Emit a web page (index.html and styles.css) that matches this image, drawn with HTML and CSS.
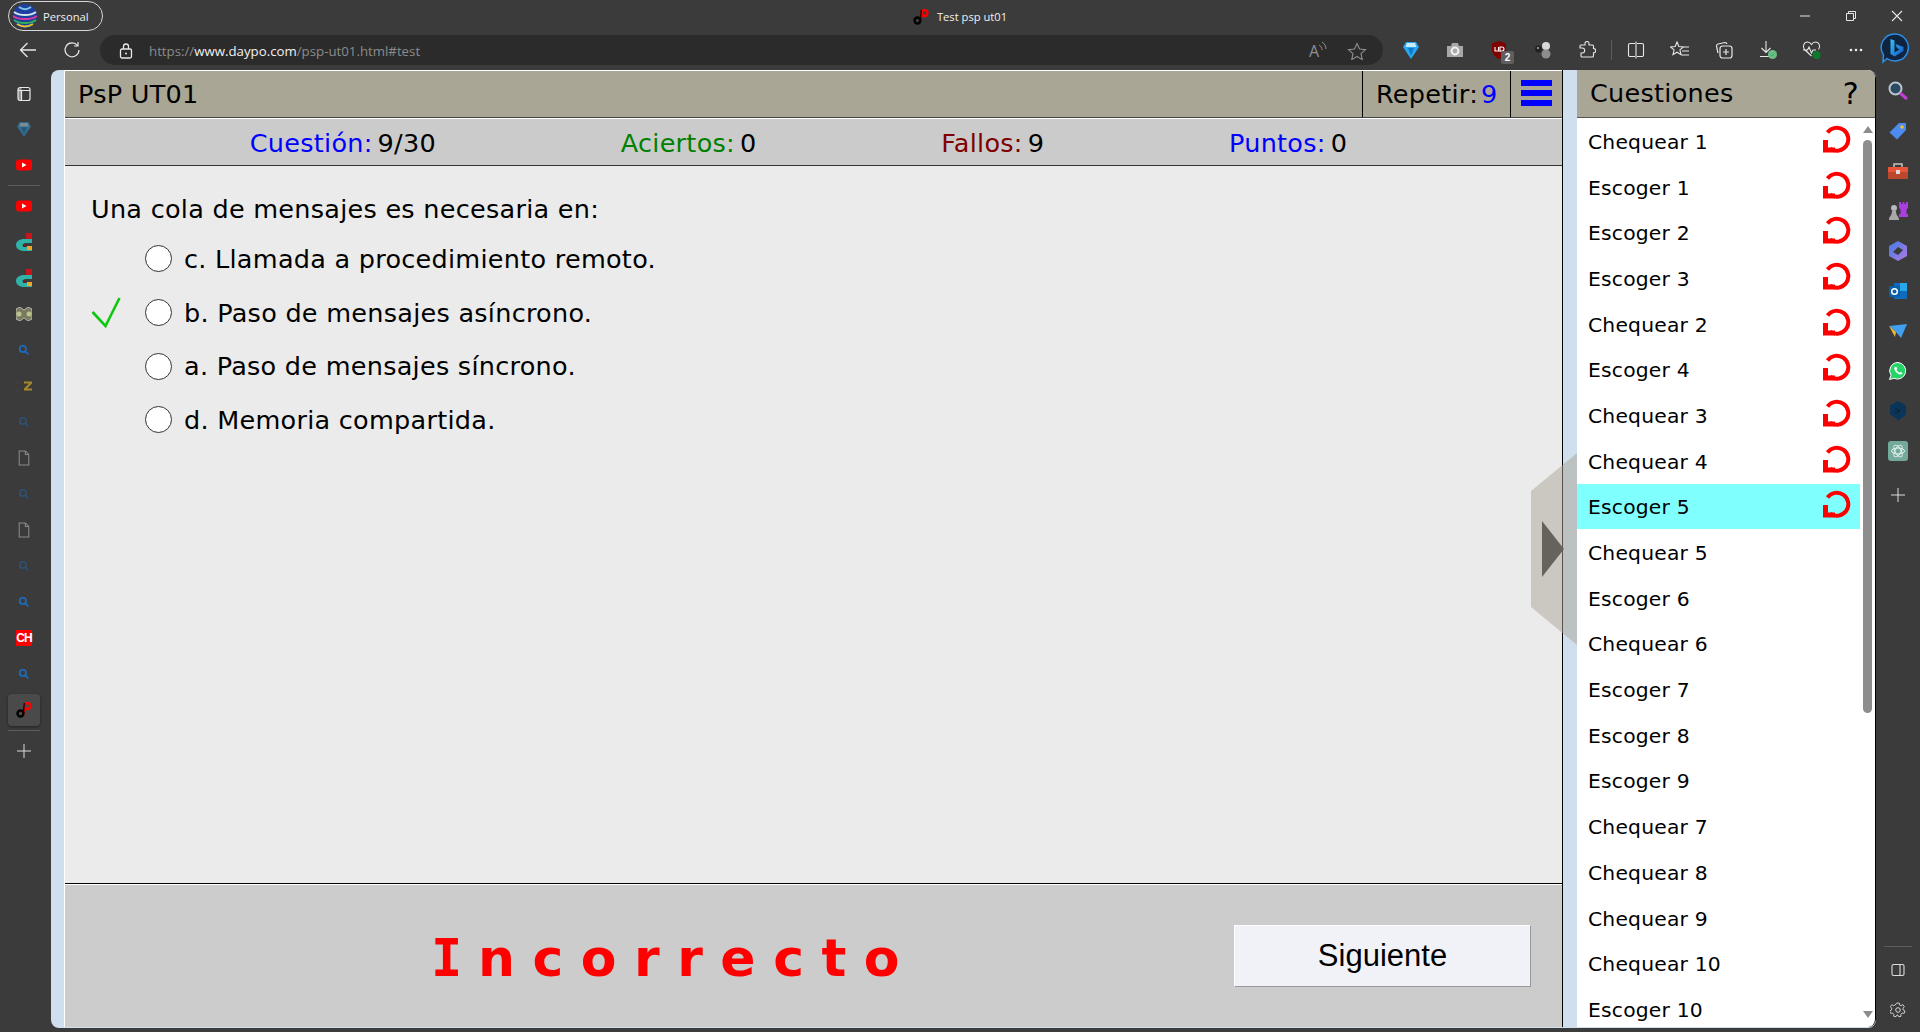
FILE: index.html
```html
<!DOCTYPE html>
<html lang="es">
<head>
<meta charset="utf-8">
<title>Test psp ut01</title>
<link rel="stylesheet" href="styles.css">
</head>
<body>
<svg class="defs" xmlns="http://www.w3.org/2000/svg">
  <symbol id="search" viewBox="0 0 16 16"><circle cx="6.5" cy="6.5" r="4.2" fill="none" stroke="#1a6fc9" stroke-width="2"/><path d="M9.8 9.8 14 14" stroke="#1a6fc9" stroke-width="2"/></symbol>
  <symbol id="doc" viewBox="0 0 16 18"><path d="M2.5 1h7l4 4v12h-11z M9.5 1v4h4" fill="none" stroke="#8a8a8a" stroke-width="1.2"/></symbol>
  <symbol id="yt" viewBox="0 0 16 12"><rect width="16" height="11" y=".5" rx="3" fill="#f00"/><path d="M6 3.5v5l4.5-2.5z" fill="#fff"/></symbol>
  <symbol id="game" viewBox="0 0 16 18"><rect x="10" y="0" width="6" height="8" fill="#c4161c"/><path d="M16 6H8C3.500 6 0 8.500 0 12s3.500 6 8 6h8v-4H9l-3-2 3-2h7z" fill="#2fb3a8"/><rect x="11" y="13" width="5" height="4" fill="#e8a92c"/><rect x="7" y="11" width="3" height="3" fill="#6e1f1f"/></symbol>
  <symbol id="redo" viewBox="0 0 28 28"><path d="M4.500 7.500A11.500 11.500 0 1 1 7 23.500" fill="none" stroke="#f00" stroke-width="4"/><path d="M0 15h5v7.500h7v5H0z" fill="#f00"/></symbol>
  <symbol id="logo" viewBox="0 0 16 16"><path d="M8.500 5 7.500 13" stroke="#f00" stroke-width="2.200"/><circle cx="4.500" cy="11.500" r="3" fill="none" stroke="#000" stroke-width="2.400"/><circle cx="11.500" cy="4" r="3" fill="none" stroke="#f00" stroke-width="2.400"/><path d="M8.300 1 7.500 11" stroke="#000" stroke-width="1.200"/></symbol>
  <symbol id="plus" viewBox="0 0 16 16"><path d="M8 1v14M1 8h14" stroke="#dcdcdc" stroke-width="1"/></symbol>
  <symbol id="gem" viewBox="0 0 16 18"><path d="M3 1h10l3 5-8 12L0 6z" fill="#29a7f0"/><path d="M4 2h8l1.500 4H2.500z" fill="#c8ecff"/><path d="M5 7h6l-3 8z" fill="#0f79c8"/></symbol>
</svg>

<header class="titlebar">
  <div class="title-left">
    <div class="profile">
      <svg class="avatar" viewBox="0 0 24 24"><circle cx="12" cy="12" r="12" fill="#1d3fa0"/><path d="M1 8c6 4 16 4 22 0" fill="none" stroke="#d8e6f0" stroke-width="2"/><path d="M0 12c6 4 18 4 24 0" fill="none" stroke="#d63aa0" stroke-width="2"/><path d="M1 16c6 4 16 4 22 0" fill="none" stroke="#2fb34f" stroke-width="2"/><path d="M4 20c5 3 11 3 16 0" fill="none" stroke="#e6c52b" stroke-width="2"/><path d="M6 3c4 3 8 3 12 0" fill="none" stroke="#7ec4e8" stroke-width="2"/></svg>
      <span>Personal</span>
    </div>
  </div>
  <div class="title-center">
    <svg class="title-icon"><use href="#logo"/></svg>
    <span>Test psp ut01</span>
  </div>
  <div class="window-controls">
    <button class="win-btn"><svg width="12" height="12" viewBox="0 0 12 12"><path d="M1 6h10" stroke="#e6e6e6"/></svg></button>
    <button class="win-btn"><svg width="12" height="12" viewBox="0 0 12 12"><path d="M1.500 3.500h7v7h-7zM3.500 3.500v-2h7v7h-2" fill="none" stroke="#e6e6e6"/></svg></button>
    <button class="win-btn"><svg width="12" height="12" viewBox="0 0 12 12"><path d="M1 1l10 10M11 1 1 11" stroke="#e6e6e6" stroke-width="1.100"/></svg></button>
  </div>
</header>

<nav class="toolbar">
  <button class="tool nav-first"><svg width="18" height="18" viewBox="0 0 18 18"><path d="M17 9H1.500M8.500 2 1.500 9l7 7" fill="none" stroke="#e8e8e8" stroke-width="1.300"/></svg></button>
  <button class="tool"><svg width="18" height="18" viewBox="0 0 18 18"><path d="M14.500 4.500A7 7 0 1 0 16 9M15 1v4h-4" fill="none" stroke="#e8e8e8" stroke-width="1.200"/></svg></button>
  <div class="address">
    <svg class="lock" width="14" height="16" viewBox="0 0 14 16"><rect x="1.500" y="6" width="11" height="9" rx="1.500" fill="none" stroke="#e8e8e8" stroke-width="1.300"/><path d="M4.500 6V3.500a2.500 2.500 0 0 1 5 0V6" fill="none" stroke="#e8e8e8" stroke-width="1.300"/><circle cx="7" cy="10.500" r="1" fill="#e8e8e8"/></svg>
    <span class="url"><span class="url-dim">https://</span><span class="url-host">www.daypo.com</span><span class="url-dim">/psp-ut01.html#test</span></span>
    <span class="address-icons">
      <span class="read-aloud"><span class="read-a">A</span><svg width="8" height="12" viewBox="0 0 8 12"><path d="M0 4c2 1 3 3 3 5M3 1c2.500 1.500 4 4 4 7" fill="none" stroke="#8f8f8f"/></svg></span>
      <svg width="20" height="18" viewBox="0 0 20 18"><path d="M10 1.500l2.500 5.500 6 .6-4.500 4 1.300 6L10 14.500 4.700 17.600 6 11.600l-4.500-4 6-.6z" fill="none" stroke="#8f8f8f" stroke-width="1.100"/></svg>
    </span>
  </div>
  <div class="tools">
    <button class="tool"><svg width="16" height="18"><use href="#gem"/></svg></button>
    <button class="tool"><svg width="18" height="16" viewBox="0 0 18 16"><path d="M1 4h4l1-3h6l1 3h4v11H1z" fill="#a8a8a8"/><circle cx="9" cy="9" r="3.400" fill="none" stroke="#f2f2f2" stroke-width="2"/></svg></button>
    <button class="tool ublock"><svg width="16" height="18" viewBox="0 0 16 18"><path d="M1 2.500 8 0l7 2.500V9c0 4-3 7-7 9-4-2-7-5-7-9z" fill="#800000"/><path d="M4 6v4h3.500V6M9 11V6h2a2 2 0 0 1 0 4H9" fill="none" stroke="#fff" stroke-width="1.100"/></svg><span class="badge">2</span></button>
    <button class="tool"><svg width="16" height="18" viewBox="0 0 16 18"><circle cx="11" cy="5" r="4" fill="#d8d8d8"/><circle cx="11" cy="13" r="4.500" fill="#8d8d8d"/><circle cx="3.500" cy="8" r="3.500" fill="#222"/><circle cx="3" cy="7" r="1" fill="#aaa"/></svg></button>
    <button class="tool"><svg width="18" height="18" viewBox="0 0 18 18"><path d="M7 2.500a2 2 0 0 1 4 0V4h3.500a1 1 0 0 1 1 1v2.500a2.200 2.200 0 0 1 0 4.400V15a1 1 0 0 1-1 1H4a1 1 0 0 1-1-1v-3h1.200a2.500 2.500 0 0 0 0-5H2V5a1 1 0 0 1 1-1h4z" fill="none" stroke="#e8e8e8" stroke-width="1.100"/></svg></button>
    <span class="tool-sep"></span>
    <button class="tool"><svg width="18" height="18" viewBox="0 0 18 18"><path d="M8 2.500H3a1.500 1.500 0 0 0-1.500 1.500v10A1.500 1.500 0 0 0 3 15.500h5M10 2.500h5A1.500 1.500 0 0 1 16.500 4v10a1.500 1.500 0 0 1-1.500 1.500h-5M9 .5v17" fill="none" stroke="#e8e8e8" stroke-width="1.100"/></svg></button>
    <button class="tool"><svg width="20" height="18" viewBox="0 0 20 18"><path d="M7 1l1.800 4.500 4.700.4-3.600 3 1.100 4.700L7 11.200l-4 2.400 1.100-4.700-3.600-3 4.700-.4zM13 6h6M12 10h7M11 14h8" fill="none" stroke="#e8e8e8" stroke-width="1.100"/></svg></button>
    <button class="tool"><svg width="18" height="18" viewBox="0 0 18 18"><rect x="5" y="5" width="12" height="12" rx="2.500" fill="none" stroke="#e8e8e8" stroke-width="1.200"/><path d="M11 8v6M8 11h6M3 12 1.500 5A2 2 0 0 1 3 3l7-1.500a2 2 0 0 1 2 1.500" fill="none" stroke="#e8e8e8" stroke-width="1.200"/></svg></button>
    <button class="tool"><svg width="20" height="20" viewBox="0 0 20 20"><path d="M8 1v11M3.500 8 8 12.500 12.500 8M2 16.500h10" fill="none" stroke="#e8e8e8" stroke-width="1.100"/><circle cx="14.500" cy="14.500" r="4.500" fill="#6dbb86"/><path d="M12.500 14.500l1.500 1.500 2.500-2.500" fill="none" stroke="#2b5" stroke-width="1"/></svg></button>
    <button class="tool"><svg width="20" height="20" viewBox="0 0 20 20"><path d="M9.500 16 2.500 9.500C0 6.500 2 2 5.500 2c2 0 3 1 4 2.500C10.500 3 11.500 2 13.500 2 17 2 19 6.500 16.500 9.500M1 10h4.500l1.500-3 2.500 6 1.500-3h3" fill="none" stroke="#e8e8e8" stroke-width="1.100"/><circle cx="14.500" cy="15" r="4" fill="#0e7a2d"/></svg></button>
    <button class="tool"><svg width="14" height="4" viewBox="0 0 14 4"><circle cx="2" cy="2" r="1.300" fill="#eee"/><circle cx="7" cy="2" r="1.300" fill="#eee"/><circle cx="12" cy="2" r="1.300" fill="#eee"/></svg></button>
    <button class="tool bing"><svg width="30" height="36" viewBox="0 0 30 36"><defs><linearGradient id="bg" x1="0" y1="0" x2="1" y2="1"><stop offset="0" stop-color="#37c6f4"/><stop offset="1" stop-color="#1252c8"/></linearGradient></defs><path d="M15 2a13.500 13.500 0 1 1-8 24.500L3 30l.5-7A13.500 13.500 0 0 1 15 2z" fill="#10233f" stroke="#2b8fe6" stroke-width="1.500"/><path d="M10.500 7l4 1.500v12l5-3-2.500-1.500-1.500-4 8 3v4l-9 5.500-4-2.500z" fill="url(#bg)"/></svg></button>
  </div>
</nav>

<div class="workspace">
  <aside class="side-left">
    <div class="side-item side-first"><svg width="14" height="16" viewBox="0 0 14 16"><rect x="1" y="1.500" width="12" height="13" rx="2" fill="none" stroke="#e8e8e8" stroke-width="1.200"/><path d="M1 4.500h12M4.500 4.500V14.500" stroke="#e8e8e8" stroke-width="1.200" fill="none"/><path d="M1 2h3.500v12.500H1z" fill="#e8e8e8" opacity=".5"/></svg></div>
    <div class="side-item dim"><svg width="14" height="16"><use href="#gem"/></svg></div>
    <div class="side-item"><svg width="16" height="12"><use href="#yt"/></svg></div>
    <div class="side-sep"></div>
    <div class="side-item"><svg width="16" height="12"><use href="#yt"/></svg></div>
    <div class="side-item"><svg width="16" height="18"><use href="#game"/></svg></div>
    <div class="side-item"><svg width="16" height="18"><use href="#game"/></svg></div>
    <div class="side-item"><svg width="16" height="14" viewBox="0 0 16 14"><path d="M0 2 4 0l4 3 4-3 4 2v10l-4 2-4-3-4 3-4-2z" fill="#7a7a60" stroke="#eee" stroke-width=".6"/><circle cx="3" cy="7" r="2.500" fill="#b9c48a"/><circle cx="13" cy="7" r="2.500" fill="#b9c48a"/></svg></div>
    <div class="side-item"><svg width="12" height="12"><use href="#search"/></svg></div>
    <div class="side-item"><svg width="16" height="10" viewBox="0 0 16 10"><path d="M0 1h3M0 9h3" stroke="#444"/><path d="M8 .5h8v2L11 7.500h5v2H8v-2l5-5H8z" fill="#a5882c"/></svg></div>
    <div class="side-item dim"><svg width="12" height="12"><use href="#search"/></svg></div>
    <div class="side-item"><svg width="14" height="16"><use href="#doc"/></svg></div>
    <div class="side-item dim"><svg width="12" height="12"><use href="#search"/></svg></div>
    <div class="side-item"><svg width="14" height="16"><use href="#doc"/></svg></div>
    <div class="side-item dim"><svg width="12" height="12"><use href="#search"/></svg></div>
    <div class="side-item"><svg width="12" height="12"><use href="#search"/></svg></div>
    <div class="side-item"><span class="ch-icon">CH</span></div>
    <div class="side-item"><svg width="12" height="12"><use href="#search"/></svg></div>
    <div class="side-item side-active"><svg width="16" height="16"><use href="#logo"/></svg></div>
    <div class="side-sep"></div>
    <div class="side-item"><svg width="16" height="16"><use href="#plus"/></svg></div>
  </aside>

  <div class="page">
    <main class="main">
      <div class="head">
        <div class="head-title">PsP UT01</div>
        <div class="head-repeat">Repetir:<span class="blue repeat-n">9</span></div>
        <div class="head-menu"><span class="menu-icon"><i></i><i></i><i></i></span></div>
      </div>
      <div class="stats">
        <div class="stat"><span class="blue">Cuestión:</span><b>9/30</b></div>
        <div class="stat"><span class="green">Aciertos:</span><b>0</b></div>
        <div class="stat"><span class="maroon">Fallos:</span><b>9</b></div>
        <div class="stat"><span class="blue">Puntos:</span><b>0</b></div>
      </div>
      <section class="question">
        <p class="q-text">Una cola de mensajes es necesaria en:</p>
        <div class="option"><span class="mark"></span><span class="radio"></span><span>c. Llamada a procedimiento remoto.</span></div>
        <div class="option"><span class="mark"><svg width="30" height="31" viewBox="0 0 30 31"><path d="M1.500 15 14.500 29 28.500 1" fill="none" stroke="#0dc80d" stroke-width="2.600"/></svg></span><span class="radio"></span><span>b. Paso de mensajes asíncrono.</span></div>
        <div class="option"><span class="mark"></span><span class="radio"></span><span>a. Paso de mensajes síncrono.</span></div>
        <div class="option"><span class="mark"></span><span class="radio"></span><span>d. Memoria compartida.</span></div>
      </section>
      <footer class="result">
        <div class="verdict"><span class="verdict-i">I</span>ncorrecto</div>
        <button class="next">Siguiente</button>
      </footer>
    </main>
    <div class="tab"><svg width="46" height="192" viewBox="0 0 46 192"><path d="M46 0 0 38v116l46 38z" fill="#aaa696" fill-opacity=".5"/><path d="M11 68v56l22-28z" fill="#66635c"/></svg></div>
    <aside class="panel">
      <div class="panel-head"><span>Cuestiones</span><span class="help">?</span></div>
      <div class="panel-body">
        <ul class="list">
          <li class="row">Chequear 1<svg class="redo"><use href="#redo"/></svg></li>
          <li class="row">Escoger 1<svg class="redo"><use href="#redo"/></svg></li>
          <li class="row">Escoger 2<svg class="redo"><use href="#redo"/></svg></li>
          <li class="row">Escoger 3<svg class="redo"><use href="#redo"/></svg></li>
          <li class="row">Chequear 2<svg class="redo"><use href="#redo"/></svg></li>
          <li class="row">Escoger 4<svg class="redo"><use href="#redo"/></svg></li>
          <li class="row">Chequear 3<svg class="redo"><use href="#redo"/></svg></li>
          <li class="row">Chequear 4<svg class="redo"><use href="#redo"/></svg></li>
          <li class="row current">Escoger 5<svg class="redo"><use href="#redo"/></svg></li>
          <li class="row">Chequear 5</li>
          <li class="row">Escoger 6</li>
          <li class="row">Chequear 6</li>
          <li class="row">Escoger 7</li>
          <li class="row">Escoger 8</li>
          <li class="row">Escoger 9</li>
          <li class="row">Chequear 7</li>
          <li class="row">Chequear 8</li>
          <li class="row">Chequear 9</li>
          <li class="row">Chequear 10</li>
          <li class="row">Escoger 10</li>
        </ul>
        <div class="scrollbar"><span class="sb-up"></span><span class="sb-thumb"></span><span class="sb-down"></span></div>
      </div>
    </aside>
  </div>

  <aside class="side-right">
    <div class="rs-item"><svg width="22" height="22" viewBox="0 0 22 22"><circle cx="8.500" cy="8.500" r="6" fill="#2d4a63" stroke="#b9c6d0" stroke-width="2"/><path d="M13 13l7 6" stroke="#c63bd6" stroke-width="3"/></svg></div>
    <div class="rs-item"><svg width="18" height="18" viewBox="0 0 18 18"><path d="M10 1h7v7l-9 9.500L.5 10.500z" fill="#4d8bf0"/><circle cx="13" cy="5" r="1.800" fill="#f2c230"/></svg></div>
    <div class="rs-item"><svg width="20" height="18" viewBox="0 0 20 18"><path d="M6 5V2h8v3" fill="none" stroke="#c9c3bd" stroke-width="1.500"/><rect y="5" width="20" height="6" fill="#e8553a"/><rect y="10" width="20" height="7" fill="#b9482c"/><rect x="8" y="8" width="4" height="4" fill="#ddd"/></svg></div>
    <div class="rs-item"><svg width="20" height="20" viewBox="0 0 20 20"><circle cx="6" cy="7" r="3" fill="#b9b9b9"/><path d="M1 19c0-4 3-4 3-9h4c0 5 3 5 3 9z" fill="#a8a8a8"/><path d="M11 1h2v2h1.500V1h2v2H18V1h2v6l-1.500 1.500V13H20v3h-9v-3h1.500V8.500L11 7z" fill="#a93fe0"/></svg></div>
    <div class="rs-item"><svg width="18" height="20" viewBox="0 0 18 20"><defs><linearGradient id="cp" x1="0" y1="0" x2="1" y2="1"><stop offset="0" stop-color="#3f7be8"/><stop offset="1" stop-color="#b27ae0"/></linearGradient></defs><path d="M9 0l9 5v10l-9 5-9-5V5z" fill="url(#cp)"/><path d="M9 6l5 3-5 5-5-3z" fill="#3b3b3b"/></svg></div>
    <div class="rs-item"><svg width="18" height="18" viewBox="0 0 18 18"><rect x="5" y="1" width="13" height="16" fill="#0f6cbd"/><rect x="11" y="1" width="7" height="8" fill="#28a8ea"/><rect y="4" width="11" height="11" rx="1" fill="#0b5ea8"/><circle cx="5.500" cy="9.500" r="2.800" fill="none" stroke="#fff" stroke-width="1.500"/></svg></div>
    <div class="rs-item"><svg width="18" height="14" viewBox="0 0 18 14"><path d="M0 2 18 0 12 14 7 8z" fill="#3ea0ef"/><path d="M0 2 7 8l-1 5z" fill="#f5b332"/></svg></div>
    <div class="rs-item"><svg width="18" height="18" viewBox="0 0 18 18"><path d="M9 .5a8.300 8.300 0 0 0-7 12.800L.5 17.500l4.400-1.200A8.300 8.300 0 1 0 9 .5z" fill="#25d366" stroke="#fff" stroke-width="1"/><path d="M6 5c-1 1-1 2.500.5 4.500S10 12.500 11.500 12.500c1 0 2-1 2-1.500l-2-1-1 .8C9.500 10.300 8 9 7.500 7.800l.8-1-1-2z" fill="#fff"/></svg></div>
    <div class="rs-item"><svg width="16" height="20" viewBox="0 0 16 20"><path d="M8 0l8 4.500v9L8 20l-1-2-7-4.500v-9z" fill="#0b3558"/><path d="M5 7l5 3-5 2" fill="none" stroke="#0e1e2e" stroke-width="1"/></svg></div>
    <div class="rs-item"><svg width="20" height="20" viewBox="0 0 20 20"><rect width="20" height="20" rx="3" fill="#74aa9c"/><g fill="none" stroke="#e7f1ee" stroke-width="1"><ellipse cx="10" cy="10" rx="6.500" ry="3"/><ellipse cx="10" cy="10" rx="6.500" ry="3" transform="rotate(60 10 10)"/><ellipse cx="10" cy="10" rx="6.500" ry="3" transform="rotate(120 10 10)"/></g></svg></div>
    <div class="rs-item rs-plus"><svg width="16" height="16"><use href="#plus"/></svg></div>
    <div class="rs-bottom">
      <div class="side-sep"></div>
      <div class="rs-item"><svg width="14" height="14" viewBox="0 0 14 14"><rect x="1" y="1.500" width="12" height="11" rx="1.500" fill="none" stroke="#dcdcdc" stroke-width="1.100"/><path d="M9 1.500v11" stroke="#dcdcdc" stroke-width="1.100"/></svg></div>
      <div class="rs-item"><svg width="16" height="16" viewBox="0 0 16 16"><circle cx="8" cy="8" r="2.300" fill="none" stroke="#dcdcdc"/><path d="M6.800 1h2.400l.4 2 1.500.7 1.800-1 1.500 2-1.400 1.500.2 1.800 1.800 1-.8 2.300-2-.3-1.300 1.300.1 2-2.300.4-1-1.800H7l-1 1.800-2.300-.4.1-2-1.300-1.300-2 .3-.8-2.300 1.800-1 .2-1.800L.3 4.700l1.500-2 1.800 1L5.100 3z" fill="none" stroke="#dcdcdc" stroke-width=".9"/></svg></div>
    </div>
  </aside>
</div>
</body>
</html>
```

FILE: styles.css
```css
* { box-sizing: border-box; }
html, body { margin: 0; height: 100%; }
body {
  width: 1920px;
  height: 1032px;
  overflow: hidden;
  background: #3b3b3b;
  font-family: "DejaVu Sans", Verdana, sans-serif;
  color: #000;
  display: flex;
  flex-direction: column;
}
.defs { display: none; }
button { border: 0; background: none; padding: 0; font: inherit; color: inherit; }
svg { display: block; }

/* title bar */
.titlebar {
  height: 30px;
  display: grid;
  grid-template-columns: 1fr auto 1fr;
  align-items: center;
  color: #f0f0f0;
  font: 11.200px "Open Sans", sans-serif;
}
.title-left { padding-left: 8px; display: flex; }
.profile {
  width: 95px;
  height: 30px;
  margin-top: 1px;
  border: 1px solid #d8d8d8;
  border-radius: 15px;
  display: flex;
  align-items: center;
  gap: 6px;
  padding-left: 4px;
}
.avatar { width: 24px; height: 24px; }
.title-center { display: flex; align-items: center; gap: 8px; padding-top: 2px; }
.title-icon { width: 16px; height: 16px; }
.window-controls { display: flex; justify-content: flex-end; }
.win-btn { width: 46px; height: 30px; display: flex; align-items: center; justify-content: center; }

/* tool bar */
.toolbar { height: 40px; display: flex; align-items: center; padding-left: 6px; }
.tool { width: 44px; height: 40px; display: flex; align-items: center; justify-content: center; position: relative; flex: none; }
.address {
  width: 1283px;
  height: 30px;
  margin-left: 6px;
  background: #2b2b2b;
  border-radius: 15px;
  display: flex;
  align-items: center;
  padding: 1px 16px 0 19px;
  font: 13.250px "Open Sans", sans-serif;
}
.url { margin-left: 16px; flex: 1; }
.url-dim { color: #8c8c8c; }
.url-host { color: #f2f2f2; }
.address-icons { display: flex; gap: 20px; align-items: center; }
.read-aloud { display: flex; align-items: flex-start; }
.read-a { font: 16px/20px "Open Sans", sans-serif; color: #8f8f8f; }
.tools { display: flex; align-items: center; margin-left: 6px; }
.tool-sep { width: 1px; height: 20px; background: #5c5c5c; margin: 0 2px 0 2px; flex: none; }
.badge {
  position: absolute;
  left: 24px;
  top: 21px;
  width: 13px;
  height: 13px;
  background: #5f5f5f;
  border-radius: 2px;
  color: #fff;
  font: bold 10px/13px "Liberation Sans", sans-serif;
  text-align: center;
}
.bing { width: 34px; }

/* browser sides */
.workspace { flex: 1; display: flex; min-height: 0; }
.side-left { width: 51px; flex: none; display: flex; flex-direction: column; align-items: center; padding-top: 7px; padding-right: 3px; }
.side-item { width: 32px; height: 36px; flex: none; display: flex; align-items: center; justify-content: center; }
.side-first { height: 34px; }
.side-item.dim svg { opacity: .45; }
.side-sep { width: 32px; height: 1px; background: #5c5c5c; margin: 2px 0 2px; flex: none; }
.side-active { height: 32px; margin: 2px 0; background: #4a4a4a; border-radius: 4px; box-shadow: 0 1px 3px rgba(0,0,0,.4); }
.ch-icon { width: 16px; height: 16px; background: #f00; color: #fff; font: bold 12px/16px "Liberation Sans", sans-serif; letter-spacing: -1px; text-align: center; }
.side-right { width: 44px; flex: none; display: flex; flex-direction: column; align-items: center; padding-top: 1px; }
.rs-item { height: 40px; flex: none; display: flex; align-items: center; justify-content: center; }
.rs-plus { height: 48px; }
.rs-bottom { margin-top: auto; padding-bottom: 2px; width: 100%; display: flex; flex-direction: column; align-items: center; }
.rs-bottom .side-sep { width: 28px; margin: 0 0 3px; }

/* page */
.page {
  width: 1825px;
  height: 958px;
  flex: none;
  position: relative;
  display: flex;
  padding-left: 13px;
  background: #cfdfee;
  border-radius: 8px;
  overflow: hidden;
}
.main {
  width: 1499px;
  height: 957px;
  display: flex;
  flex-direction: column;
  border-left: 1px solid #fff;
  border-right: 1px solid #000;
  background: #ebebeb;
}
.head {
  height: 48px;
  flex: none;
  display: flex;
  background: #aaa696;
  border-top: 1px solid #fff;
  border-bottom: 1px solid #444;
  font-size: 25.500px;
  letter-spacing: .27px;
}
.head-title { flex: 1; padding-left: 13px; line-height: 47px; }
.head-repeat { width: 148px; padding-left: 13px; border-left: 1px solid #000; line-height: 47px; white-space: nowrap; }
.repeat-n { margin-left: 3px; }
.head-menu { width: 52px; border-left: 1px solid #000; display: flex; padding: 9px 0 0 10px; }
.menu-icon { width: 31px; display: flex; flex-direction: column; gap: 4px; }
.menu-icon i { display: block; height: 6px; background: #00f; }
.blue { color: #00f; }
.green { color: #008000; }
.maroon { color: #800000; }
.stats {
  height: 48px;
  flex: none;
  display: flex;
  justify-content: space-evenly;
  align-items: center;
  padding: 1px 30px 0 0;
  background: #cbcbcb;
  border-top: 1px solid #fff;
  border-bottom: 1px solid #333;
  font-size: 25.500px;
  letter-spacing: .27px;
}
.stat b { font-weight: normal; margin-left: 5px; }
.question { flex: 1; padding: 24px 0 0 26px; font-size: 25.500px; letter-spacing: .27px; }
.q-text { margin: 0 0 4px; height: 38px; line-height: 38px; }
.option { height: 53.700px; display: flex; align-items: center; }
.mark { width: 54px; flex: none; }
.radio { width: 27px; height: 27px; margin-right: 12px; border-radius: 50%; background: #fff; border: 1px solid #333; flex: none; }
.result {
  height: 144px;
  flex: none;
  display: flex;
  align-items: center;
  background: #ccc;
  border-top: 1px solid #000;
  box-shadow: inset 0 1px 0 #fff;
}
.verdict {
  width: 1169px;
  padding: 4px 0 0 366px;
  color: #f00;
  font-weight: bold;
  font-size: 52px;
  letter-spacing: 17.500px;
  white-space: nowrap;
}
.verdict-i { font-family: "DejaVu Sans Mono", monospace; letter-spacing: 15.700px; }
.next {
  width: 297px;
  height: 62px;
  background: #f0f2f7;
  border-top: 1px solid #fff;
  border-left: 1px solid #fff;
  border-right: 1px solid #999;
  border-bottom: 1px solid #999;
  font: 31px "Liberation Sans", sans-serif;
  color: #000;
}
.tab { position: absolute; left: 1480px; top: 383px; }

/* questions panel */
.panel {
  width: 299px;
  height: 957px;
  margin-left: 14px;
  display: flex;
  flex-direction: column;
  border-right: 1px solid #000;
  border-radius: 0 8px 8px 0;
  overflow: hidden;
  background: #fff;
}
.panel-head {
  height: 48px;
  flex: none;
  display: flex;
  justify-content: space-between;
  padding: 0 16px 0 13px;
  background: #aaa696;
  border-bottom: 1px solid #555;
  font-size: 25.500px;
  letter-spacing: .27px;
  line-height: 47px;
}
.help { font-size: 30px; }
.panel-body { flex: 1; min-height: 0; display: flex; }
.list { width: 283px; margin: 0; padding: 0; list-style: none; overflow: hidden; }
.row { height: 45.700px; display: flex; align-items: center; justify-content: space-between; padding: 2px 9px 0 11px; font-size: 20.300px; letter-spacing: .2px; }
.current { background: #80ffff; }
.redo { width: 28px; height: 28px; margin-bottom: 6px; flex: none; }
.scrollbar { width: 15px; display: flex; flex-direction: column; align-items: center; padding: 8px 0 0 0; }
.sb-up { width: 0; height: 0; border-left: 5px solid transparent; border-right: 5px solid transparent; border-bottom: 7px solid #8d8d8d; }
.sb-thumb { width: 9px; height: 573px; margin-top: 7px; background: #8d8d8d; border-radius: 5px; }
.sb-down { margin-top: auto; margin-bottom: 9px; width: 0; height: 0; border-left: 5px solid transparent; border-right: 5px solid transparent; border-top: 7px solid #8d8d8d; }
```
